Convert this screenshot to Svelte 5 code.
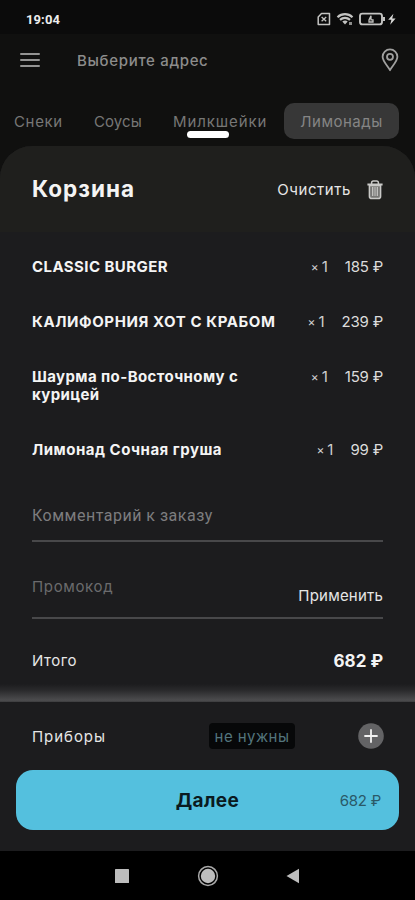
<script>
  const tabs = [
    { name: 'Снеки', x: 's1' },
    { name: 'Соусы', x: 's2' },
    { name: 'Милкшейки', x: 's3' }
  ];
  const items = [
    { name: 'CLASSIC BURGER', price: 185, cls: 'burger' },
    { name: 'КАЛИФОРНИЯ ХОТ С КРАБОМ', price: 239, cls: 'roll' },
    { name: 'Шаурма по-Восточному с курицей', price: 159, cls: 'wrap' },
    { name: 'Лимонад Сочная груша', price: 99, cls: 'drink' }
  ];
</script>

<div class="screen">
  <div class="status">
    <span class="time">19:04</span>
    <svg width="82" height="16" viewBox="0 0 82 16" fill="none" stroke="#c4c4c2" stroke-width="1.5">
      <path d="M4.5 2.5h8v11H1.2V6z" stroke-linejoin="round" />
      <path d="M4.6 6l4.6 4.2M9.2 6l-4.6 4.2" stroke-width="1.3" />
      <path d="M20.5 6.2c4.4-4 10.6-4 15 0M23 8.9c3-2.6 7-2.6 10 0" stroke-width="2.2" />
      <path d="M25.3 10.6c1.8-1.4 3.8-1.4 5.4 0L28 13.6z" fill="#c4c4c2" stroke="none" />
      <path d="M32 11h3v3h-3z" fill="#8c8c8a" stroke="none" />
      <rect x="43" y="2.6" width="22" height="10.8" rx="2.4" stroke-width="1.9" />
      <path d="M66 6h2v4h-2z" fill="#c4c4c2" stroke="none" />
      <path d="M54 4.8l-2 4.2v2h4V8.8h-2z" stroke-width="1.3" />
      <path d="M76.4 2.7l-5.2 6h3.2l-1.2 5 5.4-6.3h-3.4z" fill="#d8d8d6" stroke="none" />
    </svg>
  </div>

  <div class="topbar">
    <svg class="menu" width="20" height="16" viewBox="0 0 20 16" stroke="#949493" stroke-width="2" stroke-linecap="round">
      <path d="M1 2h18M1 8h18M1 14h18" />
    </svg>
    <span class="address">Выберите адрес</span>
    <svg class="pin" width="18" height="24" viewBox="0 0 18 24" fill="none" stroke="#a0a09f" stroke-width="1.8">
      <path d="M9 22.2C7 18.2 1.6 13.4 1.6 8.8a7.4 7.4 0 0 1 14.8 0C16.4 13.4 11 18.2 9 22.2z" stroke-linejoin="round" />
      <circle cx="9" cy="8.8" r="3" />
    </svg>
  </div>

  <div class="tabs">
    {#each tabs as tab}
      <span class="tab {tab.x}">{tab.name}</span>
    {/each}
    <span class="active"><span class="tab s4">Лимонады</span></span>
    <i class="handle"></i>
  </div>

  <main>
    <div class="head">
      <h1>Корзина</h1>
      <div class="clear">
        <span class="cleartext">Очистить</span>
        <svg width="16" height="20" viewBox="0 0 16 20" fill="none" stroke="#c9c9c7" stroke-width="1.5">
          <path d="M2.4 5.5v10.7q0 2.4 2.4 2.4h6.4q2.4 0 2.4-2.4V5.5z" fill="#777775" />
          <path d="M.4 4.4h15.2" stroke-width="2" />
          <path d="M4.6 4V2.8Q4.6 1 6.4 1h3.2q1.8 0 1.8 1.8V4" />
          <path d="M5.7 7v9M10.3 7v9" stroke-width="1.2" />
          <path d="M8 7v9" stroke-width="1" />
        </svg>
      </div>
    </div>

    <div class="list">
      {#each items as item}
        <div class="item">
          <span class="name {item.cls}">{item.name}</span>
          <span class="qty"><small>×</small>1</span>
          <span class="price">{item.price} ₽</span>
        </div>
      {/each}
    </div>

    <div class="field comment"><span>Комментарий к заказу</span></div>
    <div class="field promo">
      <span class="code">Промокод</span>
      <span class="apply">Применить</span>
    </div>
    <div class="total"><span class="tlabel">Итого</span><b>682 ₽</b></div>
  </main>

  <div class="shade"></div>

  <footer>
    <div class="tools">
      <span class="cutlery">Приборы</span>
      <span class="none"><span>не нужны</span></span>
      <svg width="26" height="26" viewBox="0 0 26 26">
        <circle cx="13" cy="13" r="12.8" fill="#636365" />
        <path d="M13 7v12M7 13h12" stroke="#f2f2f2" stroke-width="1.8" stroke-linecap="round" />
      </svg>
    </div>
    <div class="next">
      <span></span>
      <b>Далее</b>
      <span class="sum">682 ₽</span>
    </div>
  </footer>

  <nav>
    <svg width="14" height="14"><rect width="14" height="14" rx=".6" fill="#bdbdbd" /></svg>
    <svg width="22" height="22" viewBox="0 0 22 22">
      <circle cx="11" cy="11" r="9.4" fill="none" stroke="#a9a9a9" stroke-width="1.5" />
      <circle cx="11" cy="11" r="7.2" fill="#bdbdbd" />
    </svg>
    <svg width="14" height="16"><path d="M.5 8L13 .8v14.4z" fill="#bdbdbd" /></svg>
  </nav>
</div>

<style>
  :global(body) { background: #0c0c0c; }
  .screen {
    width: 415px; height: 900px; overflow: hidden;
    display: flex; flex-direction: column;
    background: #10100f; color: #e6e6e6;
    font-family: Inter, "Noto Sans", sans-serif; font-size: 15px;
    white-space: nowrap;
  }
  .screen * { box-sizing: border-box; }
  svg { display: block; flex: none; }
  .status {
    height: 34px; flex: none; background: #0b0b0b; padding: 4px 16px 0 26px;
    display: flex; align-items: center; justify-content: space-between;
  }
  .time { font: 700 13px Roboto, sans-serif; color: #ededed; letter-spacing: .1px; }
  .topbar { height: 52px; flex: none; display: flex; align-items: center; padding: 0 16px 0 20px; }
  .address { margin-left: 37px; flex: 1; font-weight: 500; font-size: 15px; letter-spacing: .68px; color: #8c8c8b; }
  .tabs { position: relative; height: 60px; flex: none; display: flex; align-items: center; padding: 10px 16px 0 14px; color: #777776; }
  .tab { font-size: 15px; letter-spacing: .5px; }
  .s1 { width: 80px; letter-spacing: .65px; }
  .s2 { width: 79px; letter-spacing: .1px; }
  .s3 { width: 111px; letter-spacing: .9px; }
  .active { width: 115px; height: 36px; border-radius: 10px; background: #373737; color: #858585; display: flex; align-items: center; justify-content: center; }
  .handle { position: absolute; left: 187px; top: 45px; width: 42px; height: 7px; border-radius: 3.5px; background: #fff; }
  main { height: 538px; flex: none; background: #1c1c1e; border-radius: 32px 32px 0 0; overflow: hidden; }
  .head { height: 86px; background: #1f1f1d; padding: 0 32px; display: flex; align-items: center; justify-content: space-between; }
  h1 { margin: 0; font-size: 22.5px; font-weight: 700; line-height: 28px; letter-spacing: 1px; color: #f4f4f4; }
  .clear { display: flex; align-items: center; gap: 16px; padding-top: 1px; }
  .cleartext { letter-spacing: .55px; }
  .list { padding: 8px 32px 0; }
  .item { display: flex; line-height: 18px; padding: 18px 0 19px; }
  .name { flex: 1; font-weight: 700; color: #f4f4f4; white-space: normal; letter-spacing: .5px; }
  .burger { letter-spacing: .43px; }
  .roll { letter-spacing: .6px; }
  .wrap { padding-right: 40px; letter-spacing: .4px; }
  .qty { margin-right: 17px; color: #cfcfcf; }
  .qty small { font-size: 12px; line-height: 0; margin-right: 3px; position: relative; top: -1px; }
  .price { letter-spacing: -.2px; color: #dcdcdc; }
  .field { margin: 0 32px; border-bottom: 2px solid #48484a; display: flex; color: #7d7d7f; }
  .comment { height: 64px; align-items: center; padding-top: 13px; font: 400 16px Roboto, sans-serif; letter-spacing: .5px; }
  .promo { height: 77px; align-items: center; justify-content: space-between; color: #6b6b6d; }
  .code { padding-top: 14px; letter-spacing: .65px; }
  .apply { padding-top: 32px; color: #e6e6e6; letter-spacing: .2px; }
  .total { height: 83px; padding: 0 32px; display: flex; align-items: center; justify-content: space-between; }
  .tlabel { letter-spacing: .5px; }
  .total b { font-size: 17px; color: #f4f4f4; }
  .shade { height: 18px; flex: none; background: linear-gradient(#1c1c1e, #2a2a2c 35%, #4c4c4e 90%, #3c3c3e); }
  footer { height: 149px; flex: none; background: #1c1c1e; padding: 0 16px; }
  .tools { height: 68px; padding: 0 15px 0 16px; display: flex; align-items: center; }
  .cutlery { width: 177px; letter-spacing: .95px; }
  .none { width: 86px; height: 26px; border-radius: 4px; background: #070809; color: #53757d; display: flex; align-items: center; justify-content: center; letter-spacing: .45px; }
  .tools svg { margin-left: auto; }
  .next { height: 60px; border-radius: 17px; background: #54c0de; color: #0a1a20; display: grid; grid-template-columns: 1fr auto 1fr; align-items: center; padding: 0 18px; }
  .next b { font-size: 19px; letter-spacing: .4px; }
  .sum { text-align: right; color: #2a5968; letter-spacing: -.25px; }
  nav { flex: 1; background: #000; display: flex; align-items: center; padding: 0 115px; justify-content: space-between; }
</style>
